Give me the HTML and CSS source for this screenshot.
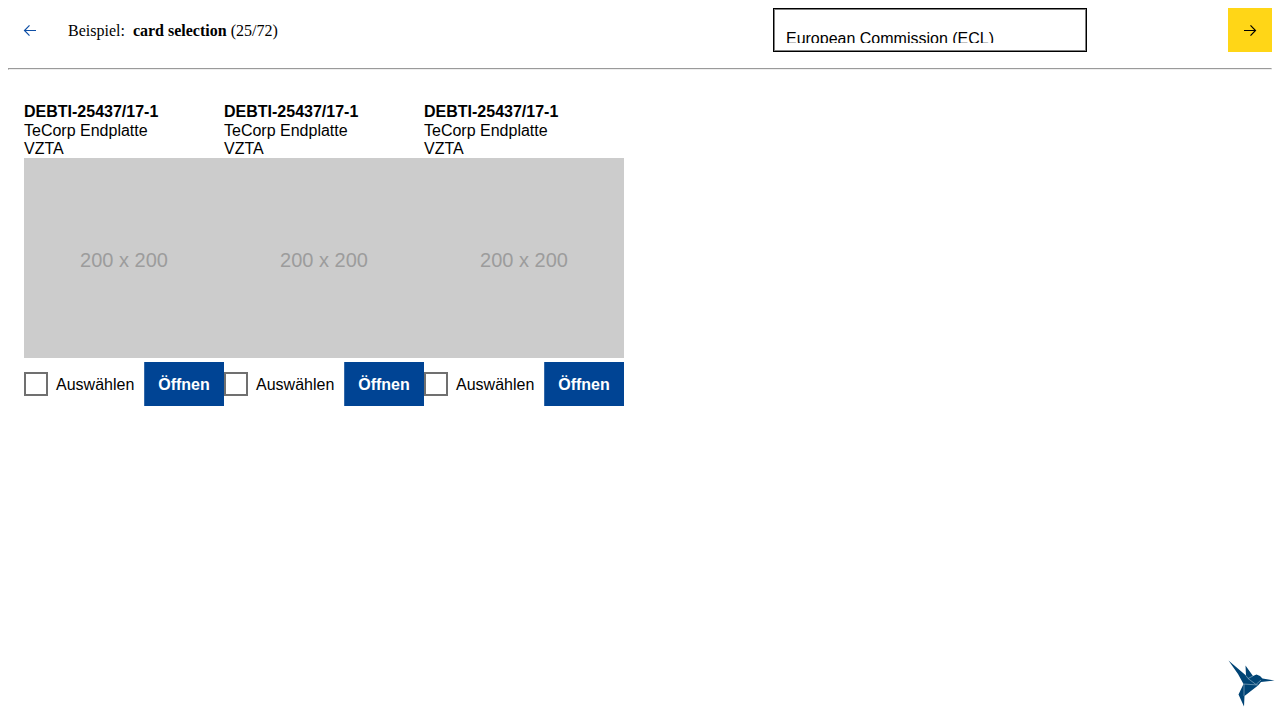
FILE: index.html
```html
<!DOCTYPE html>
<html lang="de">
<head>
<meta charset="utf-8">
<meta name="viewport" content="width=device-width, initial-scale=1">
<title>card selection</title>
<link rel="stylesheet" href="styles.css">
</head>
<body>
<header class="toolbar">
  <button class="nav-button nav-prev" type="button" aria-label="Zurück">
    <svg width="14" height="14" viewBox="0 0 14 14" aria-hidden="true"><path d="M13 7.5H1.5M6.5 2.3L1.5 7.5L6.5 12.7"/></svg>
  </button>
  <div class="title">Beispiel:&nbsp; <b>card selection</b> (25/72)</div>
  <div class="theme">
    <select class="theme-select" aria-label="Theme"><option>European Commission (ECL)</option></select>
  </div>
  <button class="nav-button nav-next" type="button" aria-label="Weiter">
    <svg width="14" height="14" viewBox="0 0 14 14" aria-hidden="true"><path d="M1 7.5H12.5M7.5 2.3L12.5 7.5L7.5 12.7"/></svg>
  </button>
</header>
<hr class="divider">
<main class="cards">
  <article class="card">
    <div class="card-text"><strong class="card-title">DEBTI-25437/17-1</strong><span>TeCorp Endplatte</span><span>VZTA</span></div>
    <div class="card-image">200 x 200</div>
    <div class="card-actions">
      <label class="choice"><input class="checkbox" type="checkbox"><span class="choice-text">Auswählen</span></label>
      <button class="open-button" type="button">Öffnen</button>
    </div>
  </article>
  <article class="card">
    <div class="card-text"><strong class="card-title">DEBTI-25437/17-1</strong><span>TeCorp Endplatte</span><span>VZTA</span></div>
    <div class="card-image">200 x 200</div>
    <div class="card-actions">
      <label class="choice"><input class="checkbox" type="checkbox"><span class="choice-text">Auswählen</span></label>
      <button class="open-button" type="button">Öffnen</button>
    </div>
  </article>
  <article class="card">
    <div class="card-text"><strong class="card-title">DEBTI-25437/17-1</strong><span>TeCorp Endplatte</span><span>VZTA</span></div>
    <div class="card-image">200 x 200</div>
    <div class="card-actions">
      <label class="choice"><input class="checkbox" type="checkbox"><span class="choice-text">Auswählen</span></label>
      <button class="open-button" type="button">Öffnen</button>
    </div>
  </article>
</main>
<svg class="bird" width="48" height="48" viewBox="0 0 48 48" aria-hidden="true">
  <path class="bird-body" d="M1.5 0.5L19 15.5L18.5 5.5L26 16L29.5 14.5L33 16L35.500 18.500L47.500 20.500L34 22L31 25.500L17.500 36L17 46.500L11.500 34.500L16.500 24L11 14Z"/>
  <path class="bird-lines" d="M19 15.500L21 18.500L26 16M21 18.500L29 24.500L34 20M16.500 24L31 25M17 24V36"/>
</svg>
</body>
</html>
```

FILE: styles.css
```css
body {
  margin: 8px;
  color: #000;
  background: #fff;
  font: 16px/18px "Liberation Serif", "Times New Roman", serif;
}

.toolbar {
  display: flex;
  align-items: center;
}

.nav-button {
  display: flex;
  flex: none;
  align-items: center;
  justify-content: center;
  width: 44px;
  height: 44px;
  padding: 0;
  border: 0;
  background: transparent;
  color: #004494;
}

.nav-button path {
  fill: none;
  stroke: currentColor;
  stroke-width: 1.2;
}

.nav-prev { color: #0f4fa5; }

.nav-next {
  background: #ffd617;
  color: #000;
}

.title {
  flex: 1;
  padding: 2px 0 0 16px;
}

.theme { width: 36%; }

.theme-select {
  appearance: none;
  box-sizing: border-box;
  display: block;
  width: 69%;
  height: 44px;
  padding: 20px 12px 8px;
  border: 1px solid #000;
  border-radius: 0;
  box-shadow: inset 0 0 0 1px #808080;
  background: #fff;
  color: #000;
  font: 16px/20px "Liberation Sans", Arial, sans-serif;
}

.divider { margin: 16px 0; }

.cards {
  display: flex;
  flex-wrap: wrap;
  padding: 16px;
  font-family: "Liberation Sans", Arial, sans-serif;
}

.card { width: 200px; }

.card-text {
  display: flex;
  flex-direction: column;
}

.card-title { line-height: 20px; }

.card-image {
  display: flex;
  align-items: center;
  justify-content: center;
  aspect-ratio: 1;
  padding-top: 4px;
  box-sizing: border-box;
  background: #ccc;
  color: #9c9c9c;
  font-size: 20px;
}

.card-actions {
  display: flex;
  align-items: center;
  justify-content: space-between;
  margin-top: 4px;
}

.choice {
  display: flex;
  align-items: center;
  gap: 8px;
}

.choice-text { padding-top: 2px; }

.checkbox {
  appearance: none;
  box-sizing: border-box;
  width: 24px;
  height: 24px;
  margin: 0;
  border: 2px solid #707070;
  background: #fff;
}

.open-button {
  width: 80px;
  height: 44px;
  padding: 2px 0 0;
  border: 0;
  box-shadow: inset 1px 0 #3369a9;
  background: #004494;
  color: #fff;
  font: bold 16px/18px "Liberation Sans", Arial, sans-serif;
}

.bird {
  position: fixed;
  right: 5px;
  bottom: 12px;
}

.bird-body { fill: #004475; }

.bird-lines {
  fill: none;
  stroke: #a0bdd0;
  stroke-width: 0.6;
}
```
